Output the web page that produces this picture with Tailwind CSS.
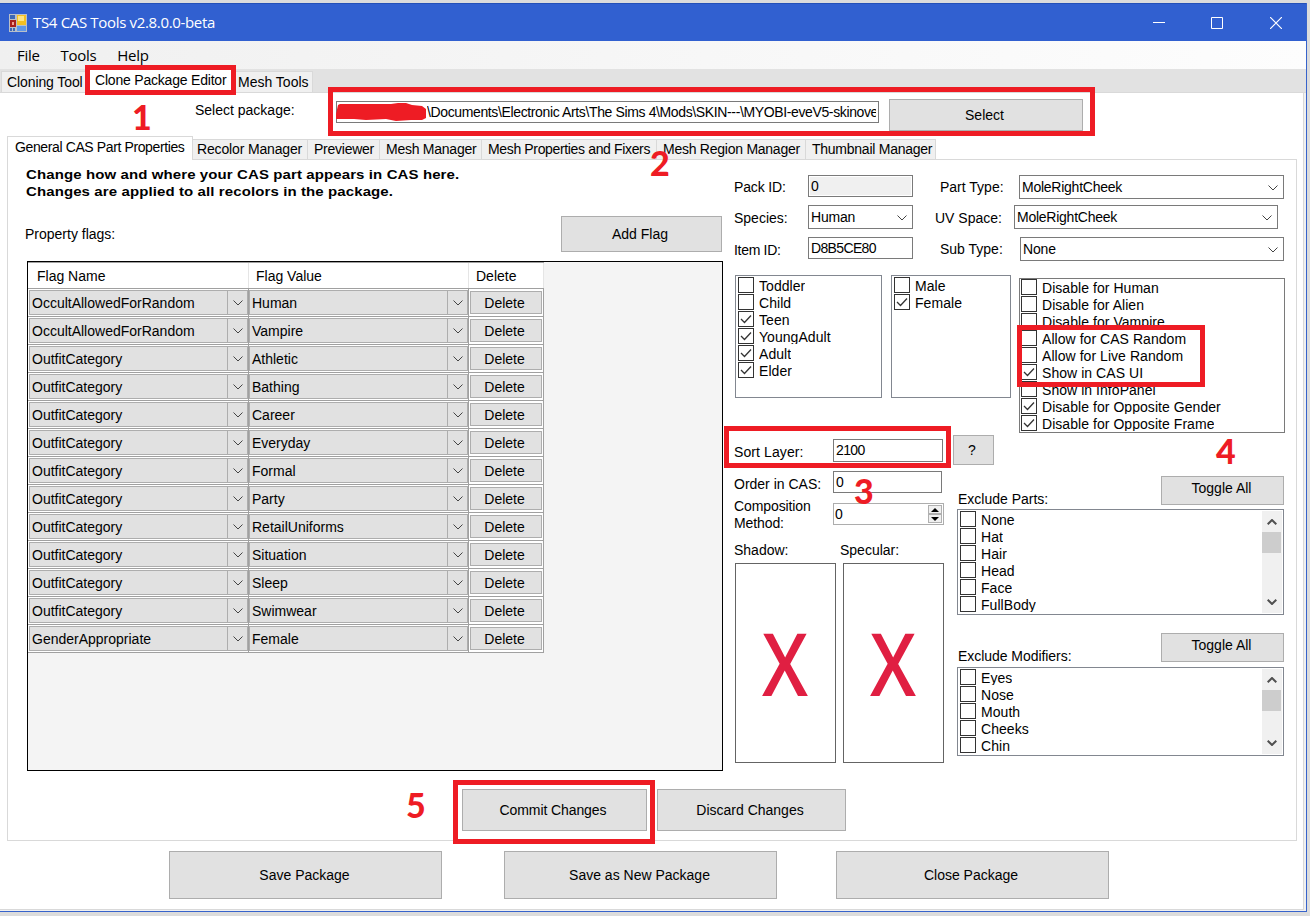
<!DOCTYPE html>
<html lang="en">
<head>
  <meta charset="UTF-8" />
  <meta name="viewport" content="width=device-width, initial-scale=1" />
  <title>TS4 CAS Tools v2.8.0.0-beta</title>
  <script src="https://cdn.jsdelivr.net/npm/@tailwindcss/browser@4"></script>
</head>
<body class="relative w-[1310px] h-[916px] overflow-hidden bg-[#dcdcdc] pt-[3px] font-['Liberation_Sans',Arial,sans-serif] text-[14px] text-black whitespace-nowrap">

  <!-- Window -->
  <div class="w-[1307px] h-[909px] flex flex-col bg-[#f0f0f0] border-r border-b border-[#3763cb]">

    <!-- Title bar -->
    <header class="h-[38px] shrink-0 flex items-center bg-[#3160d0] border-t border-[#2450b8] pl-[9px] text-white">
      <svg class="w-[18px] h-[18px]" viewBox="0 0 18 18">
        <rect width="18" height="18" fill="#b9bfc9" />
        <rect x="1" y="1" width="5" height="4" fill="#3d68b5" />
        <rect x="1" y="6" width="6" height="7" fill="#a81f1b" />
        <rect x="3" y="8" width="2" height="3" fill="#f0a090" />
        <rect x="8" y="1" width="9" height="10" fill="#f3bf22" />
        <rect x="9" y="2" width="6" height="5" fill="#ffe480" />
        <rect x="1" y="14" width="2" height="3" fill="#3d68b5" />
        <rect x="4" y="14" width="2" height="3" fill="#3d68b5" />
        <rect x="8" y="12" width="9" height="5" fill="#5e97e8" />
      </svg>
      <span class="ml-[6px] font-['Open_Sans',sans-serif] text-[15px] tracking-[-0.33px]">TS4 CAS Tools v2.8.0.0-beta</span>
      <div class="ml-auto flex items-center gap-[46px] pr-[24px]">
        <svg class="w-3 h-3" viewBox="0 0 12 12" stroke="#fff"><path d="M0 5.500h12" /></svg>
        <svg class="w-3 h-3 mr-px" viewBox="0 0 12 12" fill="none" stroke="#fff"><path d="M.5.5h11v11H.5z" /></svg>
        <svg class="w-3 h-3" viewBox="0 0 12 12" stroke="#fff" stroke-width="1.2"><path d="M0 0l12 12M12 0L0 12" /></svg>
      </div>
    </header>

    <!-- Menu -->
    <nav class="h-[28px] shrink-0 flex items-center gap-[21px] pl-[17px] bg-linear-to-r from-[#f0f0f0] to-[#fdfdfd] font-['Open_Sans',sans-serif] text-[15px] tracking-[-0.3px]">
      <span>File</span><span>Tools</span><span>Help</span>
    </nav>

    <!-- Main tabs -->
    <div class="h-[24px] shrink-0 flex items-end bg-[#e2e2e2] border-b border-[#d9d9d9] pl-px leading-[21px] tracking-[-0.2px]">
      <div class="w-[85px] h-[21px] pl-[5px] bg-[#f0f0f0] border-l border-t border-[#d9d9d9] tracking-[-0.1px]">Cloning Tool</div>
      <div class="w-[150px] h-[24px] pl-[9px] bg-white leading-[24px]">Clone Package Editor</div>
      <div class="w-[77px] h-[21px] pl-[2px] bg-[#f0f0f0] border-r border-t border-[#d9d9d9] tracking-normal">Mesh Tools</div>
    </div>

    <main class="w-[1304px] h-[817px] bg-white border-r border-b border-[#d9d9d9]">

      <!-- Package row -->
      <div class="h-[43px] flex pl-[195px]">
        <span class="w-[141px] leading-[35px]">Select package:</span>
        <div class="mt-[8px] w-[543px] h-[22px] border border-[#7a7a7a] pl-[90px] pr-[2px] leading-[20px] tracking-[-0.37px]">
          <div class="overflow-hidden">\Documents\Electronic Arts\The Sims 4\Mods\SKIN---\MYOBI-eveV5-skinove</div>
        </div>
        <button class="mt-[6px] ml-[10px] w-[194px] h-[32px] bg-[#e1e1e1] border border-[#adadad] pr-[3px] pt-px">Select</button>
      </div>

      <!-- Inner tabs -->
      <div class="h-[24px] flex items-end pl-[7px] leading-[19px] tracking-[-0.25px]">
        <div class="w-[186px] h-[24px] pl-[7px] border-l border-t border-r border-[#d9d9d9] tracking-[-0.38px] leading-[21px]">General CAS Part Properties</div>
        <div class="flex flex-1 mr-[6px] border-b border-[#d9d9d9]">
          <div class="w-[115px] h-[20px] pl-[4px] bg-[#f0f0f0] border-t border-r border-[#d9d9d9] tracking-[-0.15px]">Recolor Manager</div>
          <div class="w-[72px] h-[20px] pl-[6px] bg-[#f0f0f0] border-t border-r border-[#d9d9d9]">Previewer</div>
          <div class="w-[102px] h-[20px] pl-[6px] bg-[#f0f0f0] border-t border-r border-[#d9d9d9]">Mesh Manager</div>
          <div class="w-[175px] h-[20px] pl-[6px] bg-[#f0f0f0] border-t border-r border-[#d9d9d9] tracking-[-0.35px]">Mesh Properties and Fixers</div>
          <div class="w-[149px] h-[20px] pl-[6px] bg-[#f0f0f0] border-t border-r border-[#d9d9d9]">Mesh Region Manager</div>
          <div class="w-[130px] h-[20px] pl-[6px] bg-[#f0f0f0] border-t border-r border-[#d9d9d9]">Thumbnail Manager</div>
        </div>
      </div>

      <!-- Properties panel -->
      <section class="ml-[7px] w-[1290px] h-[681px] border-x border-b border-[#d9d9d9]">
        <div class="flex h-[611px]">

          <!-- Flags -->
          <div class="w-[715px] shrink-0">
            <p class="ml-[18px] w-[420px] pt-[6px] text-[13.5px] font-bold leading-[17px] tracking-[0.1px] origin-left scale-x-[1.11]">Change how and where your CAS part appears in CAS here.<br />Changes are applied to all recolors in the package.</p>
            <div class="mt-[16px] flex justify-between pl-[17px] pr-px">
              <span class="leading-[36px]">Property flags:</span>
              <button class="w-[161px] h-[36px] bg-[#e1e1e1] border border-[#adadad] pr-[3px] pt-px">Add Flag</button>
            </div>
            <div class="mt-[9px] ml-[19px] w-[696px] h-[510px] bg-[#f4f4f4] border border-black">
              <div class="w-[516px] h-[27px] flex bg-white border-t border-b border-[#a0a0a0] leading-[27px]">
                <span class="w-[221px] pl-[9px] border-r border-[#e5e5e5]">Flag Name</span>
                <span class="w-[220px] pl-[7px] border-r border-[#e5e5e5]">Flag Value</span>
                <span class="flex-1 pl-[7px] border-r border-[#e5e5e5]">Delete</span>
              </div>
              <div id="flags"></div>
            </div>
          </div>

          <!-- Part details -->
          <div class="pl-[11px] pt-[15px] shrink-0">
            <div class="flex items-start h-[30px]">
              <span class="w-[74px] leading-[25px] tracking-[-0.15px]">Pack ID:</span>
              <div class="w-[105px] h-[22px] bg-[#f0f0f0] border border-[#7a7a7a] shadow-[inset_0_0_0_1px_#fff] pl-[2px] leading-[21px]">0</div>
              <span class="ml-[27px] w-[79px] leading-[25px]">Part Type:</span>
              <div class="w-[265px] h-[24px] flex items-center justify-between border border-[#7a7a7a] pl-[2px] pr-[5px] leading-[22px] tracking-[-0.25px]">MoleRightCheek<svg class="w-[10px] h-[6px] mt-0.5" viewBox="0 0 10 6" fill="none" stroke="#444"><path d="M.5.5L5 5 9.500.5" /></svg></div>
            </div>
            <div class="flex items-start h-[32px]">
              <span class="w-[74px] leading-[26px]">Species:</span>
              <div class="w-[105px] h-[24px] flex items-center justify-between border border-[#7a7a7a] pl-[2px] pr-[5px] leading-[22px] tracking-[-0.2px]">Human<svg class="w-[10px] h-[6px] mt-0.5" viewBox="0 0 10 6" fill="none" stroke="#444"><path d="M.5.5L5 5 9.500.5" /></svg></div>
              <span class="ml-[22px] w-[79px] leading-[26px]">UV Space:</span>
              <div class="w-[264px] h-[24px] flex items-center justify-between border border-[#7a7a7a] pl-[2px] pr-[5px] leading-[22px] tracking-[-0.25px]">MoleRightCheek<svg class="w-[10px] h-[6px] mt-0.5" viewBox="0 0 10 6" fill="none" stroke="#444"><path d="M.5.5L5 5 9.500.5" /></svg></div>
            </div>
            <div class="flex items-start h-[38px]">
              <span class="w-[74px] leading-[26px] tracking-[-0.3px]">Item ID:</span>
              <div class="w-[105px] h-[22px] border border-[#7a7a7a] pl-[2px] leading-[21px] tracking-[-0.65px]">D8B5CE80</div>
              <span class="ml-[27px] w-[80px] leading-[25px]">Sub Type:</span>
              <div class="w-[264px] h-[24px] flex items-center justify-between border border-[#7a7a7a] pl-[2px] pr-[5px] leading-[22px] tracking-[-0.15px]">None<svg class="w-[10px] h-[6px] mt-0.5" viewBox="0 0 10 6" fill="none" stroke="#444"><path d="M.5.5L5 5 9.500.5" /></svg></div>
            </div>

            <div class="flex items-start h-[160px] pl-px">
              <div id="ages" class="w-[147px] h-[123px] border border-[#828790] pl-[2px] pt-px"></div>
              <div id="genders" class="ml-[9px] w-[120px] h-[123px] border border-[#828790] pl-[2px] pt-px"></div>
              <div id="limits" class="ml-[8px] mt-[3px] w-[266px] h-[155px] border border-[#7a7a7a] pl-px overflow-hidden"></div>
            </div>

            <div class="flex">
              <div class="w-[223px] shrink-0">
                <div class="flex items-start h-[36px]">
                  <span class="w-[99px] shrink-0 leading-[35px] tracking-[0.1px]">Sort Layer:</span>
                  <div class="mt-[4px] w-[110px] shrink-0 h-[23px] border border-[#7a7a7a] pl-[2px] leading-[21px] tracking-[-0.6px]">2100</div>
                  <button class="ml-[10px] w-[41px] shrink-0 h-[30px] bg-[#e1e1e1] border border-[#adadad] pr-[3px] pt-px">?</button>
                </div>
                <div class="flex items-start h-[32px]">
                  <span class="w-[99px] leading-[27px]">Order in CAS:</span>
                  <div class="w-[109px] h-[22px] border border-[#7a7a7a] pl-[2px] leading-[21px]">0</div>
                </div>
                <div class="flex items-start h-[39px]">
                  <span class="w-[99px] -mt-[5px] leading-[17px] tracking-[-0.1px]">Composition<br />Method:</span>
                  <div class="w-[111px] h-[22px] flex justify-between border border-[#adadad] pl-[1px] pr-px leading-[20px]">0
                    <div class="w-[14px] flex flex-col justify-center">
                      <div class="h-[9px] flex items-center justify-center bg-[#f0f0f0] border border-[#b0b0b0]"><svg class="w-[8px] h-[4px]" viewBox="0 0 8 4"><path d="M0 4L4 0 8 4z" /></svg></div>
                      <div class="h-[9px] flex items-center justify-center bg-[#f0f0f0] border border-[#b0b0b0]"><svg class="w-[8px] h-[4px]" viewBox="0 0 8 4"><path d="M0 0L4 4 8 0z" /></svg></div>
                    </div>
                  </div>
                </div>
                <div class="flex h-[21px] leading-[17px]"><span class="w-[106px]">Shadow:</span><span>Specular:</span></div>
                <div class="flex gap-[7px] pl-px font-['Open_Sans',sans-serif] text-[87px] text-[#e01f42] font-semibold tracking-normal leading-[196px]">
                  <div class="w-[101px] h-[200px] flex justify-center border border-[#646464]"><span class="scale-x-85">X</span></div>
                  <div class="w-[101px] h-[200px] flex justify-center border border-[#646464]"><span class="scale-x-85">X</span></div>
                </div>
              </div>

              <div class="w-[327px] pt-[41px]">
                <div class="flex justify-between pl-px h-[29px]">
                  <span class="pt-[14px] leading-[18px]">Exclude Parts:</span>
                  <button class="w-[123px] h-[29px] bg-[#e1e1e1] border border-[#adadad] pb-[4px] pr-[2px]">Toggle All</button>
                </div>
                <div class="mt-[4px] h-[106px] flex justify-between border border-[#828790] pl-[2px] pr-px py-px">
                  <div id="parts"></div>
                  <div class="w-[20px] bg-[#f0f0f0] flex flex-col items-center">
                    <svg class="w-[10px] h-[6px] mt-[8px]" viewBox="0 0 10 6" fill="none" stroke="#505050" stroke-width="2"><path d="M.7 5.300L5 1l4.300 4.300" /></svg>
                    <div class="mt-[7px] mr-px w-[19px] h-[21px] bg-[#cdcdcd]"></div>
                    <svg class="w-[10px] h-[6px] mt-auto mb-[8px]" viewBox="0 0 10 6" fill="none" stroke="#505050" stroke-width="2"><path d="M.7.7L5 5 9.300.7" /></svg>
                  </div>
                </div>
                <div class="mt-[18px] flex justify-between pl-px h-[29px]">
                  <span class="pt-[14px] leading-[18px] tracking-[-0.05px]">Exclude Modifiers:</span>
                  <button class="w-[123px] h-[29px] bg-[#e1e1e1] border border-[#adadad] pb-[4px] pr-[2px]">Toggle All</button>
                </div>
                <div class="mt-[5px] h-[89px] flex justify-between border border-[#828790] pl-[2px] pr-px py-px">
                  <div id="modifiers"></div>
                  <div class="w-[20px] bg-[#f0f0f0] flex flex-col items-center">
                    <svg class="w-[10px] h-[6px] mt-[8px]" viewBox="0 0 10 6" fill="none" stroke="#505050" stroke-width="2"><path d="M.7 5.300L5 1l4.300 4.300" /></svg>
                    <div class="mt-[7px] mr-px w-[19px] h-[21px] bg-[#cdcdcd]"></div>
                    <svg class="w-[10px] h-[6px] mt-auto mb-[8px]" viewBox="0 0 10 6" fill="none" stroke="#505050" stroke-width="2"><path d="M.7.7L5 5 9.300.7" /></svg>
                  </div>
                </div>
              </div>
            </div>
          </div>
        </div>

        <div class="mt-[18px] ml-[454px] flex gap-[10px]">
          <button class="w-[185px] h-[42px] bg-[#e1e1e1] border border-[#adadad] pr-[3px] pt-px tracking-[-0.1px]">Commit Changes</button>
          <button class="w-[189px] h-[42px] bg-[#e1e1e1] border border-[#adadad] pr-[3px] pt-px">Discard Changes</button>
        </div>
      </section>

      <!-- Package actions -->
      <div class="mt-[10px] ml-[169px] flex">
        <button class="w-[273px] h-[48px] bg-[#e1e1e1] border border-[#adadad] pr-[2px] pt-px">Save Package</button>
        <button class="ml-[62px] w-[273px] h-[48px] bg-[#e1e1e1] border border-[#adadad] pr-[2px] pt-px">Save as New Package</button>
        <button class="ml-[59px] w-[273px] h-[48px] bg-[#e1e1e1] border border-[#adadad] pr-[3px] pt-px">Close Package</button>
      </div>
    </main>
  </div>

  <!-- Step markers -->
  <div class="absolute left-[85px] top-[65px] w-[151px] h-[30px] border-5 border-[#ee1c24]"></div>
  <div class="absolute left-[328px] top-[87px] w-[767px] h-[49px] border-5 border-[#ee1c24]"></div>
  <div class="absolute left-[724px] top-[426px] w-[227px] h-[42px] border-5 border-[#ee1c24]"></div>
  <div class="absolute left-[1017px] top-[325px] w-[188px] h-[62px] border-5 border-[#ee1c24]"></div>
  <div class="absolute left-[453px] top-[780px] w-[202px] h-[64px] border-5 border-[#ee1c24]"></div>
  <svg class="absolute left-[336px] top-[102px] w-[92px] h-[20px]" viewBox="0 0 92 20" fill="#ee1c24"><path d="M2 3L4 2H55L62 1H70L76 3 86 4 90 7V16L86 18H75L60 19 50 17 30 18 18 17 0 17V12z" /></svg>
  <div class="font-['Lato',sans-serif] font-black text-[34px] leading-[34px] text-[#ee1c24]">
    <span class="absolute left-[132px] top-[100px]">1</span>
    <span class="absolute left-[650px] top-[146px]">2</span>
    <span class="absolute left-[854px] top-[474px]">3</span>
    <span class="absolute left-[1216px] top-[434px]">4</span>
    <span class="absolute left-[406px] top-[788px]">5</span>
  </div>

  <script>
    const flags = [
      ["OccultAllowedForRandom", "Human"],
      ["OccultAllowedForRandom", "Vampire"],
      ["OutfitCategory", "Athletic"],
      ["OutfitCategory", "Bathing"],
      ["OutfitCategory", "Career"],
      ["OutfitCategory", "Everyday"],
      ["OutfitCategory", "Formal"],
      ["OutfitCategory", "Party"],
      ["OutfitCategory", "RetailUniforms"],
      ["OutfitCategory", "Situation"],
      ["OutfitCategory", "Sleep"],
      ["OutfitCategory", "Swimwear"],
      ["GenderAppropriate", "Female"],
    ];

    function combo(text) {
      return `<div class="flex-1 h-[25px] flex bg-[#e1e1e1] border border-[#adadad] pl-[2px] leading-[25px]">
        <span class="flex-1">${text}</span>
        <span class="w-[20px] flex items-center justify-center border-l border-[#adadad]">
          <svg class="w-[10px] h-[6px]" viewBox="0 0 10 6" fill="none" stroke="#444"><path d="M.5.5L5 5 9.500.5" /></svg>
        </span>
      </div>`;
    }

    document.getElementById("flags").innerHTML = flags.map(([name, value]) => `
      <div class="w-[516px] h-[28px] flex bg-white border-b border-[#a0a0a0]">
        <div class="w-[221px] flex pt-px pl-px border-r border-[#a0a0a0]">${combo(name)}</div>
        <div class="w-[220px] flex pt-px border-r border-[#a0a0a0]">${combo(value)}</div>
        <div class="w-[75px] pt-[2px] pl-px border-r border-[#a0a0a0]">
          <button class="block w-[72px] h-[23px] bg-[#e1e1e1] border border-[#adadad] pr-[3px] leading-[23px]">Delete</button>
        </div>
      </div>`).join("");

    // Items starting with * are checked
    function checklist(id, items) {
      document.getElementById(id).innerHTML = items.map((item) => {
        const checked = item[0] === "*";
        return `<div class="h-[17px] flex overflow-hidden">
          <span class="w-[16px] h-[16px] border border-[#333] bg-white">
            ${checked ? '<svg class="w-[14px] h-[14px]" viewBox="0 0 14 14" fill="none" stroke="#333" stroke-width="1.3"><path d="M2 7l3.500 3.500L12 3.500" /></svg>' : ""}
          </span>
          <span class="ml-[5px] h-[16px] overflow-hidden leading-[19px] tracking-[0.05px]">${checked ? item.slice(1) : item}</span>
        </div>`;
      }).join("");
    }

    checklist("ages", ["Toddler", "Child", "*Teen", "*YoungAdult", "*Adult", "*Elder"]);
    checklist("genders", ["Male", "*Female"]);
    checklist("limits", ["Disable for Human", "Disable for Alien", "Disable for Vampire", "Allow for CAS Random", "Allow for Live Random", "*Show in CAS UI", "Show in InfoPanel", "*Disable for Opposite Gender", "*Disable for Opposite Frame"]);
    checklist("parts", ["None", "Hat", "Hair", "Head", "Face", "FullBody"]);
    checklist("modifiers", ["Eyes", "Nose", "Mouth", "Cheeks", "Chin"]);
  </script>

</body>
</html>
